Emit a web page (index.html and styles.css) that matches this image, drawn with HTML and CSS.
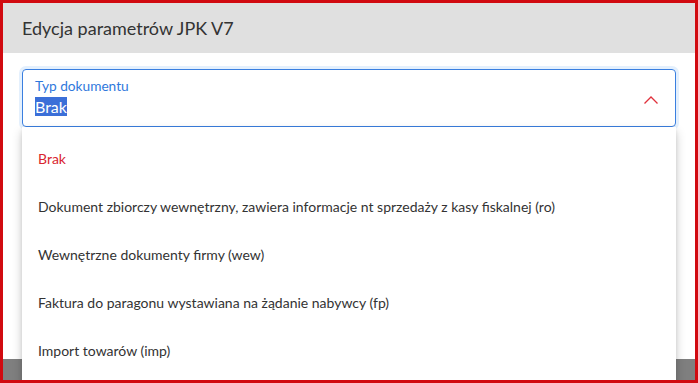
FILE: index.html
```html
<!DOCTYPE html>
<html lang="pl">
<head>
    <meta charset="UTF-8">
    <meta name="viewport" content="width=device-width, initial-scale=1.0">
    <title>Edycja parametrów JPK V7</title>
    <link rel="stylesheet" href="styles.css">
</head>
<body>

    <div class="frame">
        <div class="dialog">
            <div class="dialog-header">Edycja parametrów JPK V7</div>

            <div class="dialog-body">
                <!-- pole wyboru typu dokumentu (otwarte) -->
                <div class="select-field">
                    <div class="select-text">
                        <span class="select-label">Typ dokumentu</span>
                        <span class="select-value"><span class="selected">Brak</span></span>
                    </div>
                    <svg class="chevron" width="14" height="8" viewBox="0 0 14 8">
                        <path d="M0.5 7.5 L7 1 L13.5 7.5" fill="none" stroke="#e0313c" stroke-width="1.3"/>
                    </svg>

                    <ul class="select-menu">
                        <li class="active">Brak</li>
                        <li>Dokument zbiorczy wewnętrzny, zawiera informacje nt sprzedaży z kasy fiskalnej (ro)</li>
                        <li>Wewnętrzne dokumenty firmy (wew)</li>
                        <li>Faktura do paragonu wystawiana na żądanie nabywcy (fp)</li>
                        <li>Import towarów (imp)</li>
                    </ul>
                </div>
            </div>
        </div>
        <div class="backdrop"></div>
    </div>

</body>
</html>
```

FILE: styles.css
```css
* {
    box-sizing: border-box;
}

html, body {
    margin: 0;
    padding: 0;
    height: 100%;
    overflow: hidden;
}

body {
    font-family: Lato, 'Open Sans', sans-serif;
    color: #333;
    background: #fff;
}

.frame {
    width: 698px;
    height: 383px;
    border: 3px solid #d10a10;
    display: flex;
    flex-direction: column;
    overflow: hidden;
}

.dialog {
    height: 356px;
    background: #fff;
    display: flex;
    flex-direction: column;
    flex-shrink: 0;
}

.dialog-header {
    height: 50px;
    background: #e0e0e0;
    padding: 0 19px;
    display: flex;
    align-items: center;
    font-size: 18px;
    color: #333;
}

.dialog-body {
    padding: 16px 19px 0;
}

.backdrop {
    flex: 1;
    background: #7f7f7f;
}

/* pole select */
.select-field {
    position: relative;
    height: 58px;
    border: 1px solid #3a7fe0;
    border-radius: 4px;
    box-shadow: 0 0 0 3px #e4f0fd;
    padding: 0 17px 0 12px;
    display: flex;
    align-items: center;
}

.select-text {
    flex: 1;
    display: flex;
    flex-direction: column;
}

.select-label {
    font-size: 13.7px;
    color: #2f78dc;
    line-height: 18px;
    margin-top: -2px;
}

.select-value {
    font-size: 16px;
    line-height: 20px;
    margin-top: 2px;
}

.selected {
    background: #3b6fd8;
    color: #fff;
}

.chevron {
    margin-top: 3px;
}

.select-menu {
    position: absolute;
    top: 57px;
    left: -1px;
    right: -1px;
    margin: 0;
    padding: 8px 0 10px;
    list-style: none;
    background: #fff;
    box-shadow: 0 5px 10px rgba(0, 0, 0, 0.2), 0 2px 4px rgba(0, 0, 0, 0.1);
    z-index: 5;
}

.select-menu li {
    height: 48px;
    line-height: 48px;
    padding: 0 16px;
    font-size: 14px;
    color: #333;
    white-space: nowrap;
}

.select-menu li.active {
    color: #d9262f;
}
```
